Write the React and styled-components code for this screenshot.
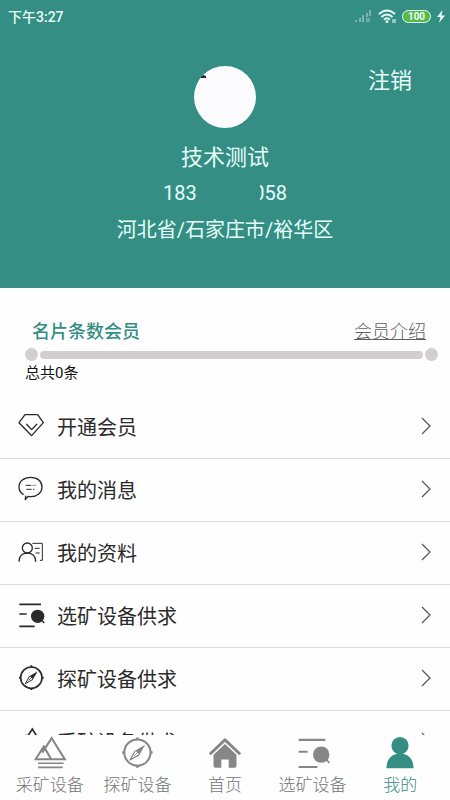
import React from "react";
import styled, { createGlobalStyle } from "styled-components";

const colors = {
  primary: "#358e84",
  text: "#2b2b2b",
  muted: "#868686",
  track: "#d0cece",
  border: "#dcdcdc",
  white: "#fefefe",
};

const fonts = {
  main: `Roboto, "Noto Sans CJK SC", sans-serif`,
};

const menu = [
  { label: "开通会员", icon: DiamondIcon },
  { label: "我的消息", icon: MessageIcon },
  { label: "我的资料", icon: ProfileIcon },
  { label: "选矿设备供求", icon: SelectIcon },
  { label: "探矿设备供求", icon: CompassIcon },
  { label: "采矿设备供求", icon: MountainIcon },
];

const tabs = [
  { label: "采矿设备", icon: MountainIcon },
  { label: "探矿设备", icon: CompassIcon },
  { label: "首页", icon: HomeIcon },
  { label: "选矿设备", icon: SelectIcon },
  { label: "我的", icon: UserIcon, active: true },
];

function Icon({ size, children }) {
  return (
    <svg
      width={size}
      height={size}
      viewBox="0 0 78 78"
      fill="none"
      stroke="currentColor"
      strokeWidth="4"
      strokeLinejoin="round"
      overflow="visible"
      aria-hidden="true"
    >
      {children}
    </svg>
  );
}

function DiamondIcon({ size }) {
  return (
    <Icon size={size}>
      <path d="M21 5H59L76 29L41 68L3 29Z" />
      <path d="M25 33L41 50L57 33" />
    </Icon>
  );
}

function MessageIcon({ size }) {
  return (
    <Icon size={size}>
      <path d="M17 56C8 51 3 42 3 33C3 16 18 4 38 4C58 4 72 16 72 33C72 50 57 62 38 62C34 62 32 62 30 61L22 71L23 59" />
      <path d="M23 28H40M44 28H47M50 28H53M25 40H41M45 40H49" strokeWidth="3" />
    </Icon>
  );
}

function ProfileIcon({ size }) {
  return (
    <Icon size={size}>
      <circle cx="28" cy="27" r="15" />
      <path d="M3 68C3 52 13 42 28 42C43 42 53 52 53 68" />
      <path d="M43 13H73V64H66M50 28H65M53 42H65" strokeWidth="3" />
    </Icon>
  );
}

function SelectIcon({ size }) {
  return (
    <Icon size={size}>
      <path d="M4 7H69M4 36H26M4 73H50" strokeWidth="5" />
      <circle cx="59" cy="43" r="20" fill="currentColor" stroke="none" />
      <path d="M70 54L79 63" />
    </Icon>
  );
}

function CompassIcon({ size }) {
  return (
    <Icon size={size}>
      <circle cx="40" cy="38" r="32" strokeWidth="5" />
      <path d="M40 1V7M40 69V75M3 38H9M71 38H77" strokeWidth="6" />
      <path d="M59 19L35 33L45 43Z" fill="currentColor" stroke="none" />
      <path d="M35 33L22 56L45 43" strokeWidth="3" />
      <path d="M46 32L32 46" strokeWidth="2" />
    </Icon>
  );
}

function MountainIcon({ size }) {
  return (
    <Icon size={size}>
      <path d="M20 38L43 3L75 54H4L24 23L42 54" strokeLinejoin="miter" strokeWidth="5" />
      <path d="M10 64H72M10 74H70" />
    </Icon>
  );
}

function HomeIcon({ size }) {
  return (
    <Icon size={size}>
      <path d="M2 42L39 7L76 42" strokeWidth="7" />
      <path
        d="M39 17L67 43V70Q67 75 62 75H48V55H30V75H16Q11 75 11 70V43Z"
        fill="currentColor"
        stroke="none"
      />
    </Icon>
  );
}

function UserIcon({ size }) {
  return (
    <Icon size={size}>
      <g fill="currentColor" stroke="none">
        <circle cx="39" cy="21" r="21" />
        <path d="M6 76C6 52 20 40 39 40C58 40 72 52 72 76Z" />
      </g>
    </Icon>
  );
}

function SignalIcon() {
  return (
    <svg width="18" height="14" viewBox="0 0 18 14" fill="#7db5ae" aria-hidden="true">
      <path d="M1 11h2v2H1zM5 9h2v4H5zM8 6h2v7H8zM12 4h2v4h-2zM15 1h2v6h-2z" />
      <path d="M12 9l4 4M16 9l-4 4" stroke="#7db5ae" strokeWidth="1.3" />
    </svg>
  );
}

function WifiIcon() {
  return (
    <svg width="18" height="14" viewBox="0 0 18 14" fill="none" stroke="#e6fffb" strokeWidth="2" aria-hidden="true">
      <path d="M1 5Q9 -2 17 5M3.500 8Q9 3 14.500 8M6 10.500Q9 8 12 10.500" />
      <circle cx="9" cy="12.500" r="1.500" fill="#e6fffb" stroke="none" />
      <path d="M15 10v4M17 10v4" strokeWidth="1" />
    </svg>
  );
}

function BoltIcon() {
  return (
    <svg width="8" height="13" viewBox="0 0 8 13" fill="#e6fffb" aria-hidden="true">
      <path d="M5.500 0L0 7H3.500L2 13L8 5.500H4.500Z" />
    </svg>
  );
}

function App() {
  return (
    <>
      <GlobalStyle />
      <Page>
        <Content>
          <Header>
            <StatusBar>
              <span>下午3:27</span>
              <StatusIcons>
                <SignalIcon />
                <WifiIcon />
                <Battery>100</Battery>
                <BoltIcon />
              </StatusIcons>
            </StatusBar>
            <ProfileTop>
              <Avatar viewBox="0 0 62 62" role="img" aria-label="头像">
                <circle cx="31" cy="31" r="31" fill="#fbfbfd" />
                <path d="M7 11L9 9L12 10V12H7Z" fill="#1d2b2b" />
              </Avatar>
              <LogoutButton type="button">注销</LogoutButton>
            </ProfileTop>
            <Name>技术测试</Name>
            <Phone>
              <span>183</span>
              <PhoneEnd>
                <CutDigit>0</CutDigit>58
              </PhoneEnd>
            </Phone>
            <Address>河北省/石家庄市/裕华区</Address>
          </Header>
          <Member>
            <MemberTop>
              <MemberTitle>名片条数会员</MemberTitle>
              <MemberLink href="#intro">会员介绍</MemberLink>
            </MemberTop>
            <Progress>
              <Dot />
              <Track />
              <Dot />
            </Progress>
            <Total>总共0条</Total>
          </Member>
          <Menu>
            {menu.map(({ label, icon: ItemIcon }) => (
              <li key={label}>
                <MenuItem type="button">
                  <ItemIcon size={26} />
                  <MenuLabel>{label}</MenuLabel>
                  <Chevron viewBox="0 0 10 18" aria-hidden="true">
                    <path d="M1 1L9 9L1 17" />
                  </Chevron>
                </MenuItem>
              </li>
            ))}
          </Menu>
        </Content>
        <TabBar>
          {tabs.map(({ label, icon: TabIcon, active }) => (
            <Tab key={label} type="button" $active={active}>
              <TabIcon size={32} />
              {label}
            </Tab>
          ))}
        </TabBar>
      </Page>
    </>
  );
}
export default App;

const GlobalStyle = createGlobalStyle`
  * {
    box-sizing: border-box;
  }
  body {
    margin: 0;
    background: ${colors.white};
    color: ${colors.text};
    font-family: ${fonts.main};
  }
  button {
    padding: 0;
    border: none;
    background: none;
    color: inherit;
    font-family: inherit;
    cursor: pointer;
  }
`;

const Page = styled.div`
  display: flex;
  flex-direction: column;
  height: 100vh;
`;

const Content = styled.main`
  flex: 1;
  min-height: 0;
  overflow-y: auto;
  scrollbar-width: none;
`;

const Header = styled.header`
  display: flex;
  flex-direction: column;
  align-items: center;
  padding-bottom: 38px;
  background: ${colors.primary};
  color: #e6fffb;
`;

const StatusBar = styled.div`
  display: flex;
  align-items: center;
  justify-content: space-between;
  width: 100%;
  height: 32px;
  padding: 0 5px 0 8px;
  font-size: 14px;
  font-weight: 500;
`;

const StatusIcons = styled.div`
  display: flex;
  align-items: center;
  gap: 6px;
`;

const Battery = styled.span`
  width: 29px;
  height: 13px;
  border: 1px solid #e6fffb;
  border-radius: 7px;
  background: #57b947;
  font-size: 10px;
  font-weight: 700;
  line-height: 11px;
  text-align: center;
`;

const ProfileTop = styled.div`
  display: grid;
  grid-template-columns: 1fr 62px 1fr;
  align-items: start;
  width: 100%;
  padding: 34px 38px 0;
`;

const Avatar = styled.svg`
  grid-column: 2;
  width: 62px;
  height: 62px;
`;

const LogoutButton = styled.button`
  justify-self: end;
  font-size: 22px;
  line-height: 30px;
`;

const Name = styled.h1`
  margin: 12px 0 0;
  font-size: 22px;
  font-weight: 400;
  line-height: 36px;
`;

const Phone = styled.div`
  display: flex;
  justify-content: space-between;
  width: 124px;
  font-size: 20px;
  line-height: 34px;
`;

const PhoneEnd = styled.span`
  display: flex;
`;

const CutDigit = styled.span`
  display: flex;
  justify-content: flex-end;
  width: 5px;
  overflow: hidden;
`;

const Address = styled.p`
  margin: 0;
  font-size: 20px;
  line-height: 40px;
`;

const Member = styled.section`
  padding: 32px 12px 11px 25px;
`;

const MemberTop = styled.div`
  display: flex;
  align-items: center;
  justify-content: space-between;
  padding: 0 12px 0 7px;
  line-height: 24px;
`;

const MemberTitle = styled.h2`
  margin: 0;
  color: ${colors.primary};
  font-size: 18px;
  font-weight: 500;
`;

const MemberLink = styled.a`
  color: #5f5f5f;
  font-size: 18px;
  font-weight: 300;
`;

const Progress = styled.div`
  display: flex;
  align-items: center;
  gap: 2px;
  margin-top: 4px;
`;

const Dot = styled.span`
  width: 13px;
  height: 13px;
  border-radius: 50%;
  background: ${colors.track};
`;

const Track = styled.span`
  flex: 1;
  height: 8px;
  border-radius: 4px;
  background: ${colors.track};
`;

const Total = styled.p`
  margin: 0;
  color: #111;
  font-size: 15px;
  line-height: 24px;
`;

const Menu = styled.ul`
  margin: 0;
  padding: 0;
  list-style: none;
`;

const MenuItem = styled.button`
  display: flex;
  align-items: center;
  gap: 13px;
  width: 100%;
  height: 63px;
  padding: 0 19px 2px 18px;
  border-bottom: 1px solid ${colors.border};
  text-align: left;
`;

const MenuLabel = styled.span`
  flex: 1;
  font-size: 20px;
`;

const Chevron = styled.svg`
  width: 10px;
  height: 18px;
  fill: none;
  stroke: #555;
  stroke-width: 1.2;
`;

const TabBar = styled.nav`
  display: grid;
  grid-template-columns: repeat(5, 1fr);
  height: 65px;
  padding: 0 6px;
  background: ${colors.white};
`;

const Tab = styled.button`
  display: flex;
  flex-direction: column;
  align-items: center;
  gap: 4px;
  padding-top: 2px;
  color: ${(props) => (props.$active ? colors.primary : "#757575")};
  font-size: 17px;
  font-weight: 300;
  line-height: 24px;
  white-space: nowrap;

  svg {
    color: ${(props) => (props.$active ? colors.primary : colors.muted)};
  }
`;
